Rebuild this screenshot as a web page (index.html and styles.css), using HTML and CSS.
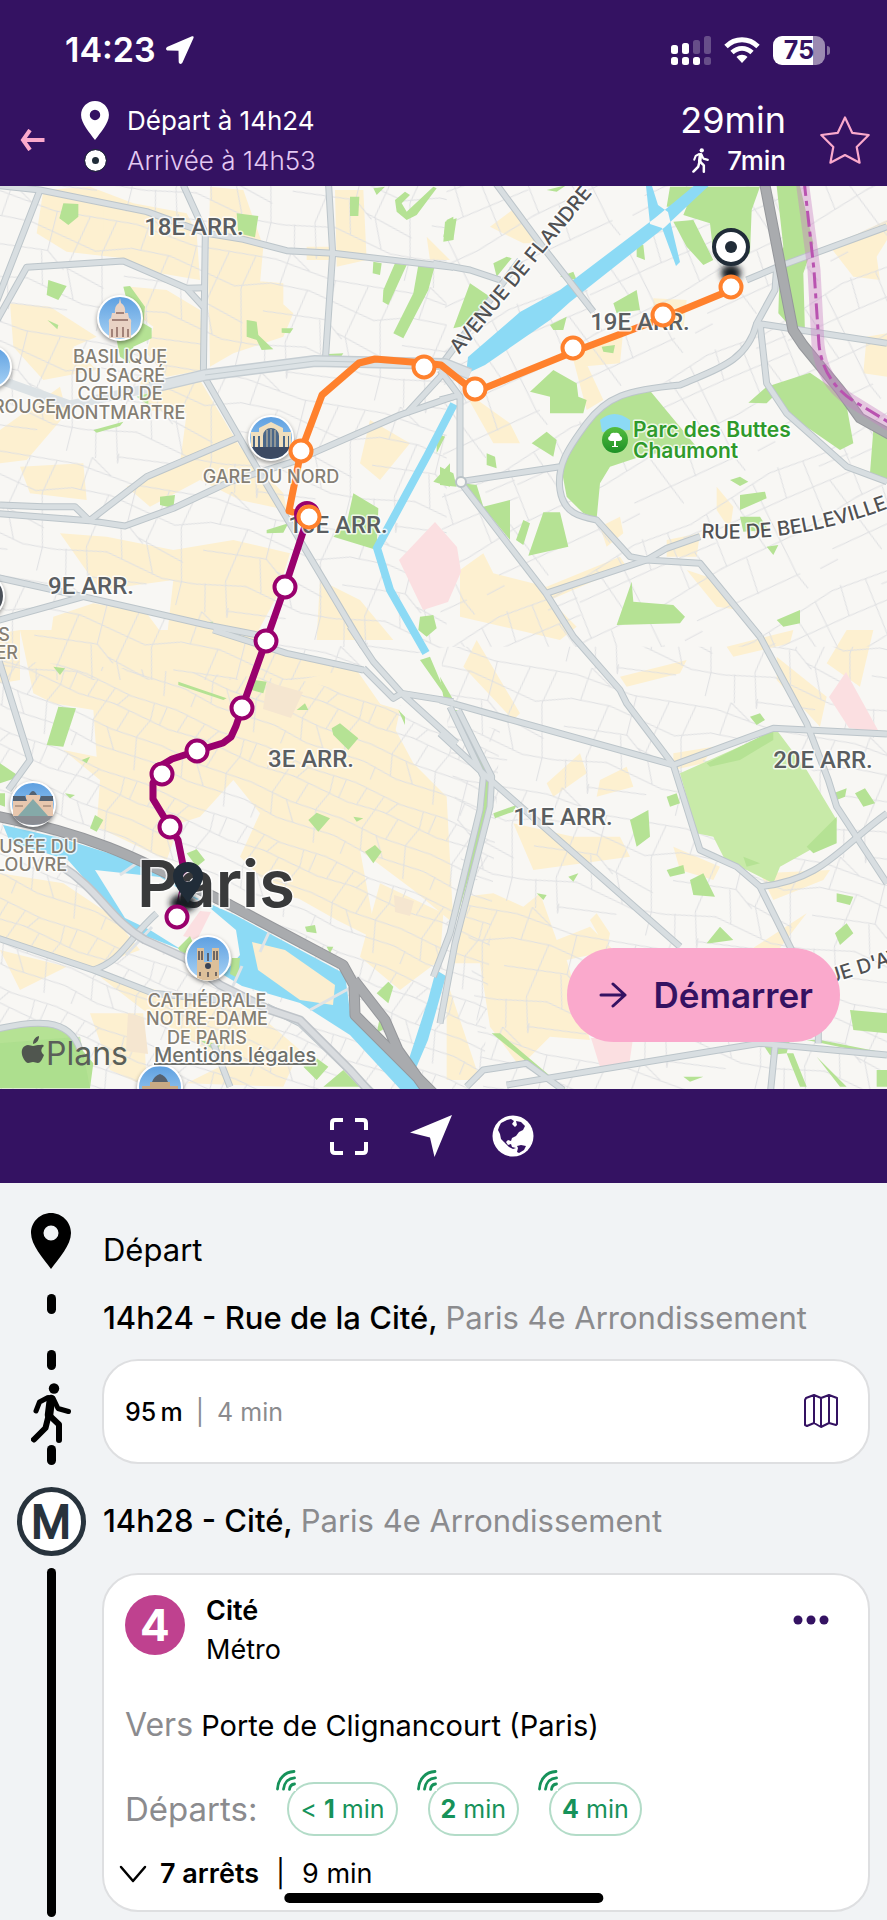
FILE: index.html
```html
<!DOCTYPE html>
<html lang="fr">
<head>
<meta charset="utf-8">
<meta name="viewport" content="width=device-width, initial-scale=1">
<title>Itinéraire</title>
<link rel="stylesheet" href="styles.css">
</head>
<body>
<svg class="sprite" aria-hidden="true">
  <symbol id="pin" viewBox="0 0 40 56"><path fill-rule="evenodd" d="M20 0C9 0 0 9 0 20c0 12 12 25 20 36 8-11 20-24 20-36C40 9 31 0 20 0Zm0 12.500a7.500 7.500 0 1 1 0 15 7.500 7.500 0 0 1 0-15Z"/></symbol>
  <symbol id="walk" viewBox="0 0 40 60"><circle cx="23" cy="5.500" r="5.200"/><g fill="none" stroke="currentColor" stroke-linecap="round" stroke-linejoin="round"><path stroke-width="5" d="M17 14.500 8.500 19 5 28"/><path stroke-width="5" d="M22 15 27 25.500 37.500 28.500"/><path stroke-width="8.500" d="M20 16 18 32"/><path stroke-width="6" d="M17.500 33 14.500 45 3 56.500"/><path stroke-width="6" d="M19 33 28 41.500V57"/></g></symbol>
  <symbol id="live" viewBox="0 0 20 21"><g fill="none" stroke="currentColor" stroke-width="2.800" stroke-linecap="round"><path d="M1.500 19C2 9 8.500 2 18 1.500"/><path d="M7.500 19.200C8 13 12 8.300 18.500 7.800"/><path d="M13.500 19.300c.3-3 2-5 5-5.300"/></g></symbol>
</svg>

<header class="top">
  <div class="status">
    <div class="status__left">
      <span class="status__time">14:23</span>
      <svg class="status__loc" viewBox="0 0 28 28" fill="#fff"><path d="M26 .3 1.500 10.800c-2.200 1-1.800 3.700.6 3.800l10.400.2.200 11c.1 2.500 2.900 2.900 3.900.5L27.500 2C28 .7 27.200-.1 26 .3Z"/></svg>
    </div>
    <div class="status__right">
      <svg class="status__signal" viewBox="0 0 40 29" fill="#fff"><rect y="9" width="7" height="9" rx="2.500"/><rect y="21" width="7" height="8" rx="2.500"/><rect x="11" y="7" width="7" height="11" rx="2.500"/><rect x="11" y="21" width="7" height="8" rx="2.500"/><rect x="22" y="21" width="7" height="8" rx="2.500"/><g opacity=".25"><rect x="22" y="4" width="7" height="14" rx="2.500"/><rect x="33" width="7" height="18" rx="2.500"/><rect x="33" y="21" width="7" height="8" rx="2.500"/></g></svg>
      <svg class="status__wifi" viewBox="0 0 36 26"><g fill="none" stroke="#fff" stroke-width="4.800"><path d="M2 9.500C11 .5 25 .5 34 9.500"/><path d="M8 15.500c6-5.600 14-5.600 20 0"/></g><path fill="#fff" d="m18 26-5.500-6c3-3 8-3 11 0Z"/></svg>
      <span class="battery"><span class="battery__level">75</span></span>
    </div>
  </div>
  <div class="trip">
    <button class="icon-btn trip__back" aria-label="Retour"><svg viewBox="0 0 25 22" fill="none" stroke="#fba9cc" stroke-width="4"><path d="M24.500 11H3M10 1 3 11l7 10"/></svg></button>
    <div class="trip__times">
      <svg class="trip__pin" fill="#fff"><use href="#pin"/></svg><span>Départ à 14h24</span>
      <i class="trip__dot"></i><span class="trip__arrival">Arrivée à 14h53</span>
    </div>
    <div class="trip__total">
      <strong class="trip__duration">29min</strong>
      <span class="trip__walk"><svg class="trip__walker" fill="#fff"><use href="#walk"/></svg>7min</span>
    </div>
    <button class="icon-btn trip__star" aria-label="Ajouter aux favoris"><svg viewBox="0 0 50 48" fill="none" stroke="#fba9cc" stroke-width="2.200" stroke-linejoin="round"><path d="m25 1.500 7.200 15.300 16.500 2.200-12 12 2.900 15.700L25 39l-14.600 7.700L13.300 31 1.300 19l16.500-2.200Z"/></svg></button>
  </div>
</header>

<main>
<section class="map" aria-label="Carte du trajet">
<svg class="map__canvas" viewBox="0 186 887 903">
  <defs>
    <pattern id="st1" width="430" height="370" patternUnits="userSpaceOnUse" patternTransform="rotate(14)"><path class="minor" d="M0 30 180 50 430 30M0 104 120 98 330 138 430 104M0 190 190 170 250 215M0 295 150 265 330 302 430 295M40 0 30 104M115 98 88 265 118 370M190 50V170M172 175 200 275M290 40 258 205 300 296M370 36 350 140 390 298V370M118 350 290 330M228 200 380 240M30 285 50 370M118 370 115 340M40 0 110 42"/></pattern>
    <pattern id="st2" width="460" height="400" patternUnits="userSpaceOnUse" patternTransform="rotate(-28)"><path class="minor" d="M0 40 180 66 460 40M0 130 220 150M235 116 460 130M0 240 200 226 460 240M60 330 400 350M30 36 10 130M105 55 85 235M150 145 190 400M235 60 215 230M325 54 345 234M400 44 390 350 400 400M0 365H60M140 92 235 100M280 234 260 345"/></pattern>
    <pattern id="st3" width="290" height="240" patternUnits="userSpaceOnUse" patternTransform="rotate(22)"><path class="minor" d="M0 24 150 36 290 24M0 88 110 76 290 88M0 140 130 150 290 140M0 196 110 210 290 196M38 27 28 85M96 32 70 143 90 208M142 36 120 78M160 79 148 148M222 30 230 82 210 144 240 240M115 147 160 205M38 198V240M262 26 260 88"/></pattern>
    <linearGradient id="sky" x2="0" y2="1"><stop stop-color="#5d9fe0"/><stop offset="1" stop-color="#a9d3f5"/></linearGradient>
    <linearGradient id="leaf" x2="0" y2="1"><stop stop-color="#54bd3f"/><stop offset="1" stop-color="#1d9126"/></linearGradient>
    <filter id="soft" x="-50%" y="-50%" width="200%" height="200%"><feGaussianBlur stdDeviation="3"/></filter>
    <g id="roads">
      <g transform="translate(0 180) scale(.33333)">
        <path d="M-20 15 120 30 440 95 620 160 730 178 860 212 1000 220 1360 262"/>
        <path d="M120 30-20 390M-20 440 80 262 370 243 560 325 615 323M560 325 610 380"/>
        <path d="M550 15 616 160 610 585 780 880 1090 1400"/>
        <path d="M985 0 998 220 975 555"/>
        <path d="M0 975 130 980 225 980 268 1022 440 890 720 770M-20 1000 268 1022 375 1038 520 985 690 905 880 845 1200 705 1360 650M1220 700 1340 570"/>
        <path d="M-20 1190 250 1250 620 1335 800 1370M250 1250-20 1325"/>
      </g>
      <g transform="translate(440 180) scale(.33333)">
        <path d="M160 0 300 190 460 395M-20 250 90 270 180 300M0 560 240 240M0 660 60 645M0 570 60 650 60 905"/>
        <path d="M60 905 318 1240 400 1370 540 1530 560 1570 700 1755 780 2010 890 2060 960 2120 1060 2320"/>
        <path d="M60 905 360 860M920 300 1010 262 1341 140M1010 262 1005 330 950 430 1341 490M960 430 980 610 1040 700 1220 860 1341 905"/>
        <path d="M950 430C920 550 820 570 720 615 560 630 500 650 440 730 380 810 350 860 360 930 370 1000 420 1010 470 1020L570 1130 620 1140 780 1150 960 1370"/>
        <path d="M318 1240 620 1140 680 1105 780 1070M960 1370 1100 1630 1165 1800 1190 1880 1341 2110"/>
        <path d="M0 1560 700 1755 1000 1645 1341 1662M960 2120C1150 2100 1200 2000 1341 1900"/>
        <path d="M0 1660 140 1790 720 2300M30 1580 130 1790 120 1890 30 2260-20 2390M55 1590 155 1790 150 1880 45 2290 0 2530"/>
        <path d="M200 2715 960 2590 1341 2625M1005 2600 990 2750M1135 2520V2590M80 2720 130 2670 260 2650 370 2730"/>
      </g>
      <g transform="translate(0 630) scale(.33333)">
        <path d="M-10 70 90 390 25 480M640 0 860 70 1090 120M1050-10 1120 95 1205 190 1370 340M1090 115 1180 205 1205 190 1360 215M-20 920 280 1020 460 1090 650 1110M280 1020C370 990 380 930 470 850"/>
        <path d="M-20 1200C100 1170 210 1160 240 1260M640 1240 690 1370M800 1130 900 1180 1120 1390"/>
      </g>
    </g>
    <g id="express">
      <path d="M764 180 793 330 803 345 840 390 860 418 900 440"/>
      <path d="M-10 815C100 835 150 865 230 905L343 965 354 985 355 1015 440 1100M354 980 385 1020 398 1050 430 1095"/>
    </g>
  </defs>
  <rect y="186" width="887" height="903" fill="#f8f7f4"/>

  <g fill="#fdf0d0">
    <g transform="translate(0 180) scale(.33333)">
      <path d="M130 30 270 20 400 70 560 100 590 160 600 300 480 280 370 235 200 215 110 160Z"/>
      <path d="M170 30 310 90 310 150 190 160ZM30 370 150 380 290 470 220 500 290 570 130 600 40 500ZM390 320 500 330 600 390 610 570 500 590 440 520 460 440 380 380Z"/>
      <path d="M630 20 730 30 790 200 780 310 880 400 850 470 700 520 630 560 625 300ZM740 300 850 310 850 420 740 400ZM1005 30 1090 30 1100 240 1010 260ZM920 200 990 200 990 240 920 240Z"/>
      <path d="M420 600 600 600 720 800 850 940 860 990 720 960 600 900 450 980 380 920 540 850 560 700 430 690ZM0 750 180 620 200 700 80 840 0 850ZM60 860 250 850 260 960 90 940Z"/>
      <path d="M180 1060 320 1070 520 1110 700 1080 870 1120 830 1250 760 1380 500 1380 520 1200 300 1230ZM280 1270 440 1300 500 1380 150 1380 160 1310ZM960 1200 1080 1260 1180 1380 950 1380ZM1110 720 1230 790 1140 900 1080 850ZM1280 170 1350 240 1290 240Z"/>
    </g>
    <g transform="translate(0 630) scale(.33333)">
      <path d="M60 0 620 0 830 60 1070 120 1160 250 1240 400 1340 500 1360 880 1240 780 1080 660 1130 930 1010 870 780 740 720 680 780 550 700 450 600 560 540 580 500 690 290 590 300 450 190 360 290 380 280 240 160 220 100 190Z"/>
      <path d="M0 730 190 760 340 860 420 960 280 1010 0 920ZM60 0 0 10 0 160 60 150ZM300 1040 640 1120 760 1140 900 1260 850 1370 560 1360 680 1300 430 1140ZM0 960 200 1010 60 1080ZM1140 760 1330 850 1320 990 1200 1080 1080 980ZM270 1150 430 1150 440 1370 330 1320Z"/>
      <path d="M1000 180 1200 240 1180 330 1060 290ZM900 640 1020 660 1000 820 860 800Z"/>
    </g>
    <g transform="translate(440 180) scale(.33333)">
      <path d="M150 140 230 80 310 190 250 190ZM640 355 740 360 730 450 640 420ZM430 500 550 450 540 550 420 560ZM400 540 430 530 490 660 440 690ZM70 630 210 730 240 790 160 790ZM1170 200 1341 120 1341 180 1310 230 1320 300 1240 290ZM1280 470 1341 460V590L1270 580Z"/>
      <path d="M60 1170 130 1120 160 1180 320 1220 540 1130 560 1160 330 1260 410 1340 360 1380 60 1310ZM480 1040 540 1010 550 1060 500 1100ZM680 1080 780 1060 770 1130 680 1130ZM740 1170 830 1200 900 1290 830 1280ZM830 920 880 980 870 1050 830 990Z"/>
      <path d="M540 1490 740 1440 720 1480 560 1520ZM860 1400 1060 1350 1050 1390 880 1430ZM1010 1430 1160 1550 1140 1640 1010 1500ZM1220 1350 1300 1350 1260 1520 1160 1450ZM110 1380 240 1600 220 1620 70 1460ZM320 1810 420 1720 440 1780 340 1850ZM480 1800 560 1760 580 1820 470 1850ZM700 1720 820 1700 790 1750 700 1770ZM220 1930 400 1970 540 1970 570 2030 280 2070ZM700 2000 840 2060 820 2100 720 2070ZM960 2080 1170 2070 1150 2100 1000 2160Z"/>
      <path d="M70 2150 160 2140 250 2180 300 2140 350 2280 450 2240 520 2310 380 2340 450 2580 330 2570 240 2660 150 2540 120 2350 30 2350ZM470 2200 510 2260 500 2310 450 2220ZM20 2400 120 2700 20 2700ZM930 2310 1100 2200 1000 2330Z"/>
    </g>
  </g>

  <path fill="url(#st1)" transform="translate(0 180) scale(.33333)" d="M0 0H1340V1400L900 1500H0Z"/>
  <path fill="url(#st3)" transform="translate(0 630) scale(.33333)" d="M0 90 900 150 1500 300 1450 1380H0Z"/>
  <path fill="url(#st2)" transform="translate(440 180) scale(.33333)" d="M20 0H1341V1400H0Z"/>
  <path fill="url(#st1)" transform="translate(440 630) scale(.33333)" d="M0 50H1341V1380H130Z"/>

  <g fill="#fbdfe1">
    <path d="m399 560 36-38 22 25 4 25-13 30-25 8ZM829 697l17-25 33 60-30-4ZM591 1038h42l-4 28-29 1ZM190 925l21-14-13 28-12-8Z"/>
    <path fill="#f5e6d0" d="m267 682 36 10-12 26-28-9ZM128 1013l16 5 4 36-22-3ZM394 895l20 6-4 15-15-4Z"/>
  </g>

  <g fill="#b5e294">
    <g transform="translate(0 180) scale(.33333)">
      <path d="M190 70 235 72 235 110 205 135 178 115ZM710 100 775 108 765 172 715 160ZM145 300 200 318 175 360 140 345ZM370 320 390 318 435 380 430 430 455 445 455 475 400 500 390 550 360 530 350 480 400 440ZM142 420 175 435 172 448ZM740 420 770 425 775 465 820 508 785 510 770 480 740 470ZM845 445H880L870 460 845 458ZM985 522 1030 520 1020 535 985 532Z"/>
      <path d="M1050 50H1078L1075 108H1050ZM1120 25 1155 20 1130 45ZM1185 60 1215 35 1230 45 1205 70 1220 95 1300 20 1310 25 1250 105 1220 120 1190 95ZM1340 120 1360 110V180L1330 170ZM1120 245 1145 250 1140 285 1118 280ZM1185 250 1220 255 1165 375 1148 365 1150 330ZM1255 255H1305L1285 330 1210 475 1180 460 1240 340Z"/>
      <path d="M410 650 445 640 445 675ZM280 750 370 725 360 738 290 758ZM480 950 525 945 520 985 480 975ZM800 1050 865 1030 850 1058 800 1060ZM1060 940 1135 985 1130 1110 1000 1070 1040 1030ZM580 1330 640 1325 630 1340ZM1260 1310 1300 1305 1310 1345 1280 1370 1255 1350ZM1310 760 1335 770 1310 820ZM1350 850V920L1300 905Z"/>
    </g>
    <g transform="translate(440 180) scale(.33333)">
      <path d="M690 20H960L935 90 930 220 870 250 820 220 810 130 730 105 740 80 680 80ZM700 125 760 120 820 240 790 255 740 200ZM1010 18H1080L1120 190 1090 280 1095 460 1060 450 1015 400 1020 240 1030 200ZM590 190 610 195 615 240 590 230ZM15 125 50 115 40 180 10 185ZM160 250 200 230 215 235 170 290ZM90 310 150 350 110 430 40 445ZM520 370 590 330 600 390 530 400ZM330 435 380 410 370 450 340 450ZM360 290 400 275 410 300ZM340 570 410 610 415 650 440 660 430 700 330 700V650L270 635ZM485 500 525 495 520 520 490 515ZM320 755 350 780 340 830 275 790ZM140 820 165 830 170 865 140 855ZM0 860 40 880 50 920 0 915ZM70 910 110 915 130 980 210 960V1080ZM250 1020 270 1030 250 1095 228 1080ZM310 997H360L385 1100 265 1127Z"/>
      <path d="M480 680 540 640 630 632 765 795 600 830 510 860 480 910 470 1015 430 1000 380 950 365 870 400 770Z"/>
      <path d="M980 620 1110 578 1215 650 1240 790 1200 810 1040 700 1010 640 980 670 925 668ZM1300 750 1341 760V910L1290 880ZM870 900 900 890 925 905 900 918ZM900 945 975 935 980 955 900 990ZM900 1010 960 1010 985 1050 910 1055ZM980 1100 1015 1095 1000 1125ZM575 1205 580 1265 700 1275 735 1310 720 1330 530 1335ZM1010 1320 1080 1290 1080 1330 1030 1340ZM320 30 380 15 350 35Z"/>
      <path fill="#c8eaa8" d="M720 1780 1010 1650 1100 1770 1190 1920 1180 1990 1110 2010 1020 2060 1000 2110 920 2070 860 2050 820 1970 770 1960Z"/>
      <path d="M800 1750 1000 1650 1000 1680 900 1740 810 1760ZM1100 2000 1190 1910 1190 1990 1120 2020ZM910 2030 960 2050 920 2060ZM930 1610 960 1600 975 1620 950 1635ZM680 1850 710 1840 720 1870 690 1880ZM570 1920 625 1890 630 1970 590 2000ZM680 2070 730 2055 735 2080 690 2090ZM750 2100 790 2080 825 2150 760 2145ZM800 2290 840 2240 880 2280 810 2290ZM1180 1840 1220 1825 1215 1850 1190 1860ZM1245 1840 1275 1825 1305 1870 1270 1880ZM1190 2140 1240 2150 1230 2175 1190 2165ZM1185 2260 1220 2230 1240 2260 1200 2295ZM160 1900 230 1875 220 1895 165 1915ZM385 2090 415 2080 400 2105ZM290 2140 320 2145 310 2160ZM0 1490 40 1560 10 1550ZM1230 2490 1341 2500V2560L1240 2550ZM970 2595 1050 2580 1040 2620 990 2625ZM1100 2580 1341 2630V2620L1140 2580ZM1040 2620 1060 2620 1100 2720 1080 2720ZM1130 2630 1220 2720 1200 2720ZM730 2690 790 2690 750 2705ZM1310 2670 1341 2670V2720H1310ZM155 2560 180 2560 380 2730 340 2710ZM35 1590 50 1590 145 1790V1890L40 2250 30 2250 130 1880V1790Z"/>
    </g>
    <g transform="translate(0 630) scale(.33333)">
      <path d="M175 230 228 235 190 350 140 345ZM535 155 680 205 670 210 535 165ZM760 150 800 155 790 190 755 180ZM995 295 1020 280 1075 325 1045 360 1000 315ZM890 240 915 220 925 240ZM0 400 60 440 0 460ZM0 490 15 490V530L0 525ZM195 490 225 495 210 505ZM270 595 285 555 310 570 290 605ZM245 390 270 380 260 400ZM160 110 195 115 180 135ZM925 570 950 548 990 565 955 605ZM1060 560 1090 565 1070 575ZM1095 665 1125 645 1145 665 1120 700ZM560 670 590 658 615 690 590 710ZM915 890 945 885 950 910 920 905ZM980 950 1000 950 990 970ZM540 930 570 915 560 990ZM700 980H720L715 1040ZM1165 1055 1180 1070 1165 1120 1130 1090ZM1140 1160 1155 1195 1130 1210ZM1195 240 1215 260 1215 285ZM1260 90 1290 80 1345 210ZM860 62 1040 100 1040 108 870 75ZM980 1110 1015 1115V1160ZM910 1310 950 1285 985 1310 950 1350ZM970 1370 1030 1320 1080 1370ZM600 1230 660 1245 650 1265ZM0 1200C100 1170 200 1170 230 1240L280 1300 270 1375H0Z"/>
      <path fill="#a6db87" d="M0 1240 240 1220 270 1375H0Z" opacity=".5"/>
    </g>
  </g>

  <g fill="#8cdaf5">
    <path d="M701 180 655 218 560 290 520 312 468 357 466 374 485 365 550 320 570 302 665 227 715 180ZM646 186H652L658 205 668 212 680 262 676 266 662 228 650 224ZM600 420Q614 408 630 420V430L602 432Z"/>
    <path fill="none" stroke="#8cdaf5" stroke-width="8" d="m454 404-27 52-50 92 13 42 36 63"/>
    <path d="M3 825 60 838 150 866 190 895 235 915 345 974 350 1012 430 1089H400L350 1035 300 1003 242 986 182 950 130 930 90 885 68 860 10 842ZM436 970 446 976 428 1040 416 1068 407 1065 428 1000Z"/>
  </g>
  <g fill="#f8f7f4">
    <path d="M95 870 160 877 210 908 236 930 240 955 225 972 190 955 150 930 125 918Z"/>
    <path fill="#fbeed0" d="M252 942 285 950 335 985 333 1005 300 1000 258 970Z"/>
    <path fill="#fbdfe1" d="m190 925 10-14 11 1-14 28-14-4Z"/>
    <path fill="#b5e294" d="m178 948 12-12 6 14-10 12ZM232 958h8l-2 20-8-4Z"/>
  </g>
  <g fill="none" stroke="#dfe3e6" stroke-width="3"><path d="m126 955 26-28M120 875l20-14M222 1010l20-44M310 1010l40-22M270 930l-10 22"/></g>

  <g fill="none" stroke-linejoin="round">
    <use href="#roads" class="road-edge"/>
    <use href="#roads" class="road"/>
    <path stroke="#c5cdd2" stroke-width="12" d="m150 388 55-13 110-14 130 3 25 10"/>
    <path stroke="#dce2e5" stroke-width="9" d="m0 380 70 25 80-17 55-13 110-14 130 3 25 10"/>
    <path stroke="#c3ccd0" stroke-width="1" d="m205 375 110-14 130 3"/>
    <path stroke="#bfc4c9" stroke-width="9" d="M60 865C100 890 110 920 145 940L185 958 220 985 270 1010 300 1020 350 1070 375 1098"/>
    <path stroke="#d9dcdf" stroke-width="6" d="M60 865C100 890 110 920 145 940L185 958 220 985 270 1010 300 1020 350 1070 375 1098"/>
    <use href="#express" stroke="#95979b" stroke-width="11"/>
    <use href="#express" stroke="#a9abae" stroke-width="9"/>
    <path stroke="#c77fc4" stroke-opacity=".4" stroke-width="13" d="M802 180 814 270 818 345Q822 382 850 400L895 428"/>
    <path stroke="#b953b0" stroke-width="3" stroke-dasharray="16 5 5 5" d="M804 180 814 270 819 345Q823 380 852 400L895 426"/>
    <circle cx="461" cy="482" r="5" fill="#f8f7f4" stroke="#b9c2c7" stroke-width="2"/>
  </g>

  <g fill="none" stroke-width="7" stroke-linejoin="round">
    <path stroke="#99006d" d="M308 517 285 587 266 641 242 708 236 726 231 737 223 743 197 751 172 759 162 765 153 783V799L170 827 178 840 183 865 184 885 177 917"/>
    <path stroke="#ff812d" d="m309 517-20-6 6-30 6-30 21-56 37-32 16-4 49 4 17 2 34 27 98-40 90-34 68-28"/>
  </g>

  <g class="arr" text-anchor="middle">
    <text x="194" y="235">18E ARR.</text><text x="338" y="533">10E ARR.</text><text x="91" y="594">9E ARR.</text><text x="640" y="330">19E ARR.</text><text x="311" y="767">3E ARR.</text><text x="563" y="825">11E ARR.</text><text x="823" y="768">20E ARR.</text>
  </g>
  <g class="poi" text-anchor="middle">
    <text x="120" y="363">BASILIQUE</text><text x="120" y="382">DU SACRÉ</text><text x="120" y="400">CŒUR DE</text><text x="120" y="419">MONTMARTRE</text>
    <text x="56" y="413" text-anchor="end">ROUGE</text><text x="271" y="483">GARE DU NORD</text>
    <text x="10" y="641" text-anchor="end">S</text><text x="18" y="659" text-anchor="end">ER</text>
    <text x="77" y="853" text-anchor="end">MUSÉE DU</text><text x="67" y="871" text-anchor="end">LOUVRE</text>
    <text x="207" y="1007">CATHÉDRALE</text><text x="207" y="1025">NOTRE-DAME</text><text x="207" y="1044">DE PARIS</text>
  </g>
  <path id="flandre" fill="none" d="M459 355 606 177"/><text class="street"><textPath href="#flandre">AVENUE DE FLANDRE</textPath></text>
  <path id="belleville" fill="none" d="M701 538C780 542 840 530 930 492"/><text class="street"><textPath href="#belleville">RUE DE BELLEVILLE</textPath></text>
  <path id="avron" fill="none" d="M816 988 900 962"/><text class="street"><textPath href="#avron">RUE D'AVRON</textPath></text>
  <g class="park"><text x="633" y="437">Parc des Buttes</text><text x="633" y="458">Chaumont</text></g>
  <circle cx="615" cy="440" r="13" fill="url(#leaf)"/>
  <path fill="#fff" d="M615 433c3-1 5 1 5 3 3 1 3 5-1 5h-3v5h2v1h-6v-1h2v-5h-3c-3 0-4-4-1-5 0-2 2-4 5-3Z"/>
  <text class="city" x="137" y="907">Paris</text>

  <g stroke="#fff" stroke-width="2">
    <g class="badge"><circle cx="120" cy="318" r="22" fill="url(#sky)"/><circle cx="271" cy="438" r="22" fill="url(#sky)"/><circle cx="33" cy="804" r="22" fill="url(#sky)"/><circle cx="208" cy="958" r="22" fill="url(#sky)"/><circle cx="160" cy="1087" r="22" fill="url(#sky)"/><circle cx="-10" cy="367" r="21" fill="url(#sky)"/><circle cx="-18" cy="596" r="22" fill="#4b5159"/></g>
  </g>
  <path fill="#e9d3c4" d="M109 338V323q-1-4 2-5l1-5h3q-1-7 4-10l1-5 1 5q5 3 4 10h3l1 5q3 1 2 5v15Z"/>
  <path stroke="#8b6a60" stroke-width="1.500" fill="none" d="M112 337v-8m5 8v-10m6 10v-10m5 10v-8M116 313h8m-12 7h16"/>
  <path fill="#3c4a63" d="M252 447h38q-6 12-19 12t-19-12Z"/><path fill="#f1dfbd" d="M251 447V432h8v-4l12-6 12 6v4h8v15Z"/><path fill="#4b6788" d="M263 447V436a8 8 0 0 1 16 0v11ZM253 436h2v11h-2Zm5 0h2v11h-2Zm25 0h2v11h-2Zm5 0h1v11h-1Z"/><path stroke="#d6c6a6" d="M271 429v18m-4-17v17m8-17v17"/>
  <path fill="#8a8c92" d="M13 816h40q-6 9-20 9t-20-9Z"/><path fill="#e8c7ae" d="M13 816V800h13v-5h14v5h13v16Z"/><path fill="#536171" d="M13 796h12l2 5H13Zm28 0h12v5H39ZM29 795q4-8 8 0Z"/><path fill="#85a9a8" d="m33 799 15 17H18Z"/><path stroke="#8a7264" d="M15 806h8m20 0h8"/>
  <path fill="#ddc09a" d="M197 978V948h7v14h8v-14h7v30q-11 5-22 0Z"/><circle cx="208" cy="966" r="3" fill="#394356"/><path stroke="#4b4850" stroke-width="1.500" d="M208 953v8m-9-10v9m3-9v9m12-9v9m3-9v9m-17 12v4m8-4v5m8-5v4"/>
  <path fill="#56606d" d="M152 1082q2-6 8-8 6 2 8 8Z"/><path fill="#c9aa84" d="M142 1089v-3h8v-4h20v4h8v3Z"/>

  <ellipse cx="731" cy="273" rx="10" ry="9" filter="url(#soft)" fill="#151b20"/>
  <ellipse cx="183" cy="903" rx="13" ry="9" filter="url(#soft)" fill="#151b20"/>
  <g fill="#fff" stroke-width="4">
    <g stroke="#99006d"><circle cx="307" cy="514" r="11"/><circle cx="285" cy="587" r="10.500"/><circle cx="266" cy="641" r="10.500"/><circle cx="242" cy="708" r="10.500"/><circle cx="197" cy="751" r="10.500"/><circle cx="162" cy="774" r="10.500"/><circle cx="170" cy="827" r="10.500"/><circle cx="177" cy="917" r="10.500"/></g>
    <g stroke="#ff812d"><circle cx="309" cy="517" r="10.500"/><circle cx="301" cy="451" r="10.500"/><circle cx="424" cy="367" r="10.500"/><circle cx="475" cy="389" r="10.500"/><circle cx="573" cy="348" r="10.500"/><circle cx="663" cy="315" r="10.500"/><circle cx="731" cy="287" r="10.500"/></g>
    <circle cx="731" cy="247" r="17" stroke="#202c38"/>
  </g>
  <circle cx="731" cy="247" r="6" fill="#202c38"/>
  <path fill="#202c38" fill-rule="evenodd" d="M188 862c-8 0-15 6-15 14 0 9 8 17 15 27 7-10 15-18 15-27 0-8-7-14-15-14Zm0 10a5 5 0 1 1 0 10 5 5 0 0 1 0-10Z"/>

  <path fill="#50564f" d="M38 1045c3 0 5-1 6 1-3 2-4 6 0 9-2 5-4 8-6 8s-3-1-5-1-3 1-5 1c-4-1-10-13-3-17 3-2 6 0 8 0s3-1 5-1Zm-5-1c0-4 2-7 6-8 0 4-2 7-6 8Z"/>
  <text class="brand" x="46" y="1065">Plans</text>
  <a href="#legal"><text class="legal" x="154" y="1062">Mentions légales</text></a>
</svg>
<button class="start"><svg class="start__arrow" viewBox="0 0 28 26" fill="none" stroke="currentColor" stroke-width="3" stroke-linecap="round" stroke-linejoin="round"><path d="M2 13h24M14 2l12 11-12 11"/></svg>Démarrer</button>
</section>

<nav class="tools" aria-label="Outils de la carte">
  <button class="icon-btn tools__btn" aria-label="Recadrer"><svg viewBox="0 0 42 42" fill="none" stroke="#fff" stroke-width="4"><path d="M4 15V8q0-3 3-3h8m12 0h8q3 0 3 3v7m0 12v8q0 3-3 3h-8m-12 0H7q-3 0-3-3v-8"/></svg></button>
  <button class="icon-btn tools__btn" aria-label="Ma position"><svg viewBox="0 0 42 42" fill="#fff"><path d="M42 0 0 17.500 20 22.500 24.500 42Z"/></svg></button>
  <button class="icon-btn tools__btn" aria-label="Type de carte"><svg viewBox="0 0 42 42"><circle cx="21" cy="21" r="20.500" fill="#fff"/><path fill="#341262" d="m7 12 2-4 6-3 4-1 3 2-2 3 3 3 2-2-1-4 5 1 4 4-2 4-4 2-3 4-4 2-1 3-3-1-2 2 2 3 3-1 1 3 4 1-3 1-4-2-5-5-3-3-1-5-2-4Zm18 19 4-1 5 1-2 4-5 3-2-1 1-4Z"/></svg></button>
</nav>

<section class="steps">
  <article class="step">
    <div class="rail">
      <svg class="rail__pin"><use href="#pin"/></svg>
      <i class="dash dash--first"></i><i class="dash dash--second"></i>
      <svg class="rail__walker"><use href="#walk"/></svg><i class="dash dash--last"></i>
    </div>
    <div class="step__body">
      <p class="step__label">Départ</p>
      <h2 class="place place--start">14h24 - Rue de la Cité, <span class="muted">Paris 4e Arrondissement</span></h2>
      <div class="card card--walk">
        <p class="walk-info"><b>95&#8239;m</b><span>|</span><span>4 min</span></p>
        <button class="icon-btn card__map" aria-label="Voir sur la carte"><svg viewBox="0 0 36 36" fill="none" stroke="#341262" stroke-width="2" stroke-linejoin="round"><path d="M2 6 3 4l8-3 7 3 8-3 8 3v26l-1 1-7-2-8 4-7-4-7 3-2-1ZM11 1v28M18 4v29M26 1v28"/></svg></button>
      </div>
    </div>
  </article>
  <article class="step">
    <div class="rail"><span class="metro">M</span><i class="rail__line"></i></div>
    <div class="step__body">
      <h2 class="place place--stop">14h28 - Cité, <span class="muted">Paris 4e Arrondissement</span></h2>
      <div class="card card--line">
        <div class="line">
          <span class="line__badge">4</span>
          <p class="line__name"><b>Cité</b><span>Métro</span></p>
          <button class="icon-btn line__more" aria-label="Plus d'options"><svg viewBox="0 0 36 10" fill="#341262"><circle cx="5" cy="5" r="4.500"/><circle cx="18" cy="5" r="4.500"/><circle cx="31" cy="5" r="4.500"/></svg></button>
        </div>
        <p class="toward"><span class="toward__label">Vers</span> Porte de Clignancourt (Paris)</p>
        <div class="departures">
          <span class="departures__label">Départs:</span>
          <span class="pill"><svg class="pill__live"><use href="#live"/></svg>&lt; <b>1</b> min</span>
          <span class="pill"><svg class="pill__live"><use href="#live"/></svg><b>2</b> min</span>
          <span class="pill"><svg class="pill__live"><use href="#live"/></svg><b>4</b> min</span>
        </div>
        <button class="stops" aria-expanded="false"><svg class="stops__chevron" viewBox="0 0 28 18" fill="none" stroke="#000" stroke-width="2.500" stroke-linecap="round" stroke-linejoin="round"><path d="m2 2 12 14L26 2"/></svg><b>7 arrêts</b><span>|</span><span>9 min</span></button>
      </div>
    </div>
  </article>
</section>
</main>
<div class="home-bar"></div>
</body>
</html>
```

FILE: styles.css
```css
* { box-sizing: border-box; }
body {
  margin: 0;
  background: #f1f3f5;
  color: #000;
  font-family: Inter, "Liberation Sans", sans-serif;
}
p, h2 { margin: 0; }
svg { display: block; }
button { font: inherit; color: inherit; border: 0; background: none; padding: 0; cursor: pointer; }
.sprite { position: absolute; width: 0; height: 0; }
.icon-btn { display: grid; place-items: center; flex: none; }
.icon-btn svg { width: 100%; }

/* Header */
.top { background: #341262; color: #fff; padding-bottom: 6px; }
.status {
  display: flex;
  justify-content: space-between;
  align-items: center;
  height: 100px;
  padding: 0 62px 0 65px;
}
.status__left, .status__right { display: flex; align-items: center; }
.status__left { gap: 10px; }
.status__right { gap: 13px; }
.status__time { font-size: 34px; font-weight: 600; line-height: 40px; }
.status__loc { width: 28px; height: 28px; }
.status__signal { width: 40px; height: 29px; }
.status__wifi { width: 36px; height: 26px; }
.battery {
  position: relative;
  width: 52px;
  height: 29px;
  border-radius: 9px;
  background: linear-gradient(90deg, #fff 76%, #9b8ab1 76%);
}
.battery::after {
  content: "";
  position: absolute;
  left: 54px;
  top: 10px;
  width: 3px;
  height: 9px;
  border-radius: 0 3px 3px 0;
  background: #85719f;
}
.battery__level { display: block; text-align: center; font-size: 25px; font-weight: 700; line-height: 29px; color: #341262; }

.trip { display: flex; align-items: center; height: 80px; padding: 0 17px 0 20px; }
.trip__back { width: 25px; }
.trip__times {
  display: grid;
  grid-template-columns: 28px auto;
  grid-auto-rows: 40px;
  align-items: center;
  justify-items: center;
  column-gap: 18px;
  margin: 0 auto 0 36px;
  font-size: 26px;
}
.trip__times span { justify-self: start; }
.trip__pin { width: 28px; height: 39px; }
.trip__dot { width: 21px; height: 21px; border: 7px solid #fff; border-radius: 50%; background: #202c38; outline: 1px solid #202c38; }
.trip__arrival { color: #e4c9f3; font-weight: 300; }
.trip__total { display: grid; grid-auto-rows: 40px; align-items: center; justify-items: end; margin-right: 34px; }
.trip__duration { font-size: 36px; font-weight: 400; }
.trip__walk { display: flex; align-items: center; gap: 18px; font-size: 26px; font-weight: 500; }
.trip__walker { width: 17px; height: 25px; }
.trip__star { width: 50px; }

/* Map */
.map { position: relative; overflow: hidden; }
.map__canvas { width: 100%; height: auto; }
.minor { fill: none; stroke: #dfe0e2; stroke-width: 3; }
.road-edge { stroke: #bcc5ca; stroke-width: 7; }
.road { stroke: #d8dee1; stroke-width: 5; }
.road-edge, .road { fill: none; }
#roads path { stroke-width: inherit; vector-effect: non-scaling-stroke; }
.arr, .poi, .street, .park, .city, .legal { paint-order: stroke; stroke: #fffc; stroke-width: 3; stroke-linejoin: round; }
.arr { font: 500 24px Roboto, sans-serif; fill: #5a5e61; }
.poi { font: 500 18px Inter, sans-serif; fill: #857f74; }
.street { font: 500 20px Inter, sans-serif; fill: #505153; }
.park { font: 600 21px Inter, sans-serif; fill: #2f9a2b; }
.city { font: 600 65px Inter, sans-serif; fill: #393a3b; }
.brand { font: 400 32px Inter, sans-serif; fill: #5a5f59; }
.legal { font: 500 20px Inter, sans-serif; fill: #6e706b; text-decoration: underline; }
.badge { filter: drop-shadow(0 2px 2px #0006); }
.start {
  position: absolute;
  right: 47px;
  bottom: 47px;
  display: flex;
  align-items: center;
  gap: 26px;
  height: 94px;
  padding: 0 27px 0 32px;
  border-radius: 47px;
  background: #faa9cc;
  color: #341262;
  font-size: 35px;
  font-weight: 600;
}
.start__arrow { width: 28px; height: 26px; }

/* Toolbar */
.tools { display: flex; justify-content: center; align-items: center; gap: 40px; height: 94px; padding-right: 26px; background: #341262; }
.tools__btn { width: 42px; height: 42px; }

/* Steps */
.steps { display: grid; gap: 22px; padding: 30px 17px 3px 0; }
.step { display: grid; grid-template-columns: 102px minmax(0, 1fr); }
.rail { display: flex; flex-direction: column; align-items: center; }
.rail > * { flex: none; }
.rail__pin { width: 40px; height: 56px; }
.rail__walker { width: 40px; height: 60px; }
.dash { width: 9px; height: 20px; border-radius: 5px; background: #000; }
.dash--first { margin: 25px 0 36px; }
.dash--second { margin-bottom: 13px; }
.dash--last { margin-top: 2px; }
.rail .rail__line { flex: 1; width: 9px; margin-top: 12px; border-radius: 5px; background: #000; }
.metro {
  display: grid;
  place-items: center;
  width: 69px;
  height: 69px;
  border: 5px solid #28333d;
  border-radius: 50%;
  background: #fff;
  color: #28333d;
  font: 400 48px/59px "Liberation Sans", sans-serif;
  -webkit-text-stroke: 2px #28333d;
}
.step__label { padding: 17px 0 0 1px; font-size: 31px; line-height: 40px; }
.place { padding-left: 1px; font-size: 31px; font-weight: 500; line-height: 40px; }
.place--start { margin: 28px 0 21px; }
.place--stop { margin: 14px 0 32px; }
.muted { color: #8b8b8e; font-weight: 400; }
.card { border: 2px solid #dedfe1; border-radius: 36px; background: #fff; }
.card--walk { display: flex; justify-content: space-between; align-items: center; height: 105px; padding: 0 29px 0 21px; }
.walk-info { display: flex; gap: 13px; font-size: 25px; color: #8b8b8e; }
.walk-info b { color: #000; font-weight: 500; }
.card__map { width: 36px; }
.card--line { margin-bottom: 5px; padding: 16px 21px; }
.line { display: flex; align-items: center; }
.line__badge {
  display: grid;
  place-items: center;
  align-self: start;
  width: 60px;
  height: 60px;
  margin: 4px 21px 0 0;
  border-radius: 50%;
  background: #bf418f;
  color: #fff;
  font-size: 44px;
  font-weight: 700;
}
.line__name { display: grid; grid-auto-rows: 39px; align-items: center; margin-right: auto; font-size: 27px; }
.line__name b { font-weight: 600; }
.line__more { width: 36px; height: 40px; align-self: start; margin: 9px 18px 0 0; }
.toward { margin-top: 36px; font-size: 29px; line-height: 40px; }
.toward__label { font-size: 32px; color: #8b8b8e; }
.departures { display: flex; align-items: center; gap: 30px; margin-top: 36px; font-size: 25px; color: #16925a; }
.departures__label { font-size: 33px; line-height: 40px; color: #8b8b8e; }
.pill { position: relative; padding: 0 11px; border: 2px solid #b3dcc8; border-radius: 27px; line-height: 50px; }
.pill b { font-weight: 700; }
.pill__live { position: absolute; left: -13px; top: -14px; width: 20px; height: 21px; background: #fff; }
.stops { display: flex; align-items: center; gap: 17px; margin: 18px 0 0 -6px; font-size: 27px; line-height: 40px; }
.stops__chevron { width: 28px; height: 18px; margin-right: -4px; }
.stops b { font-weight: 600; }

.home-bar {
  position: fixed;
  left: 50%;
  bottom: 17px;
  width: 36%;
  height: 10px;
  border-radius: 5px;
  background: #000;
  transform: translateX(-50%);
}
```
